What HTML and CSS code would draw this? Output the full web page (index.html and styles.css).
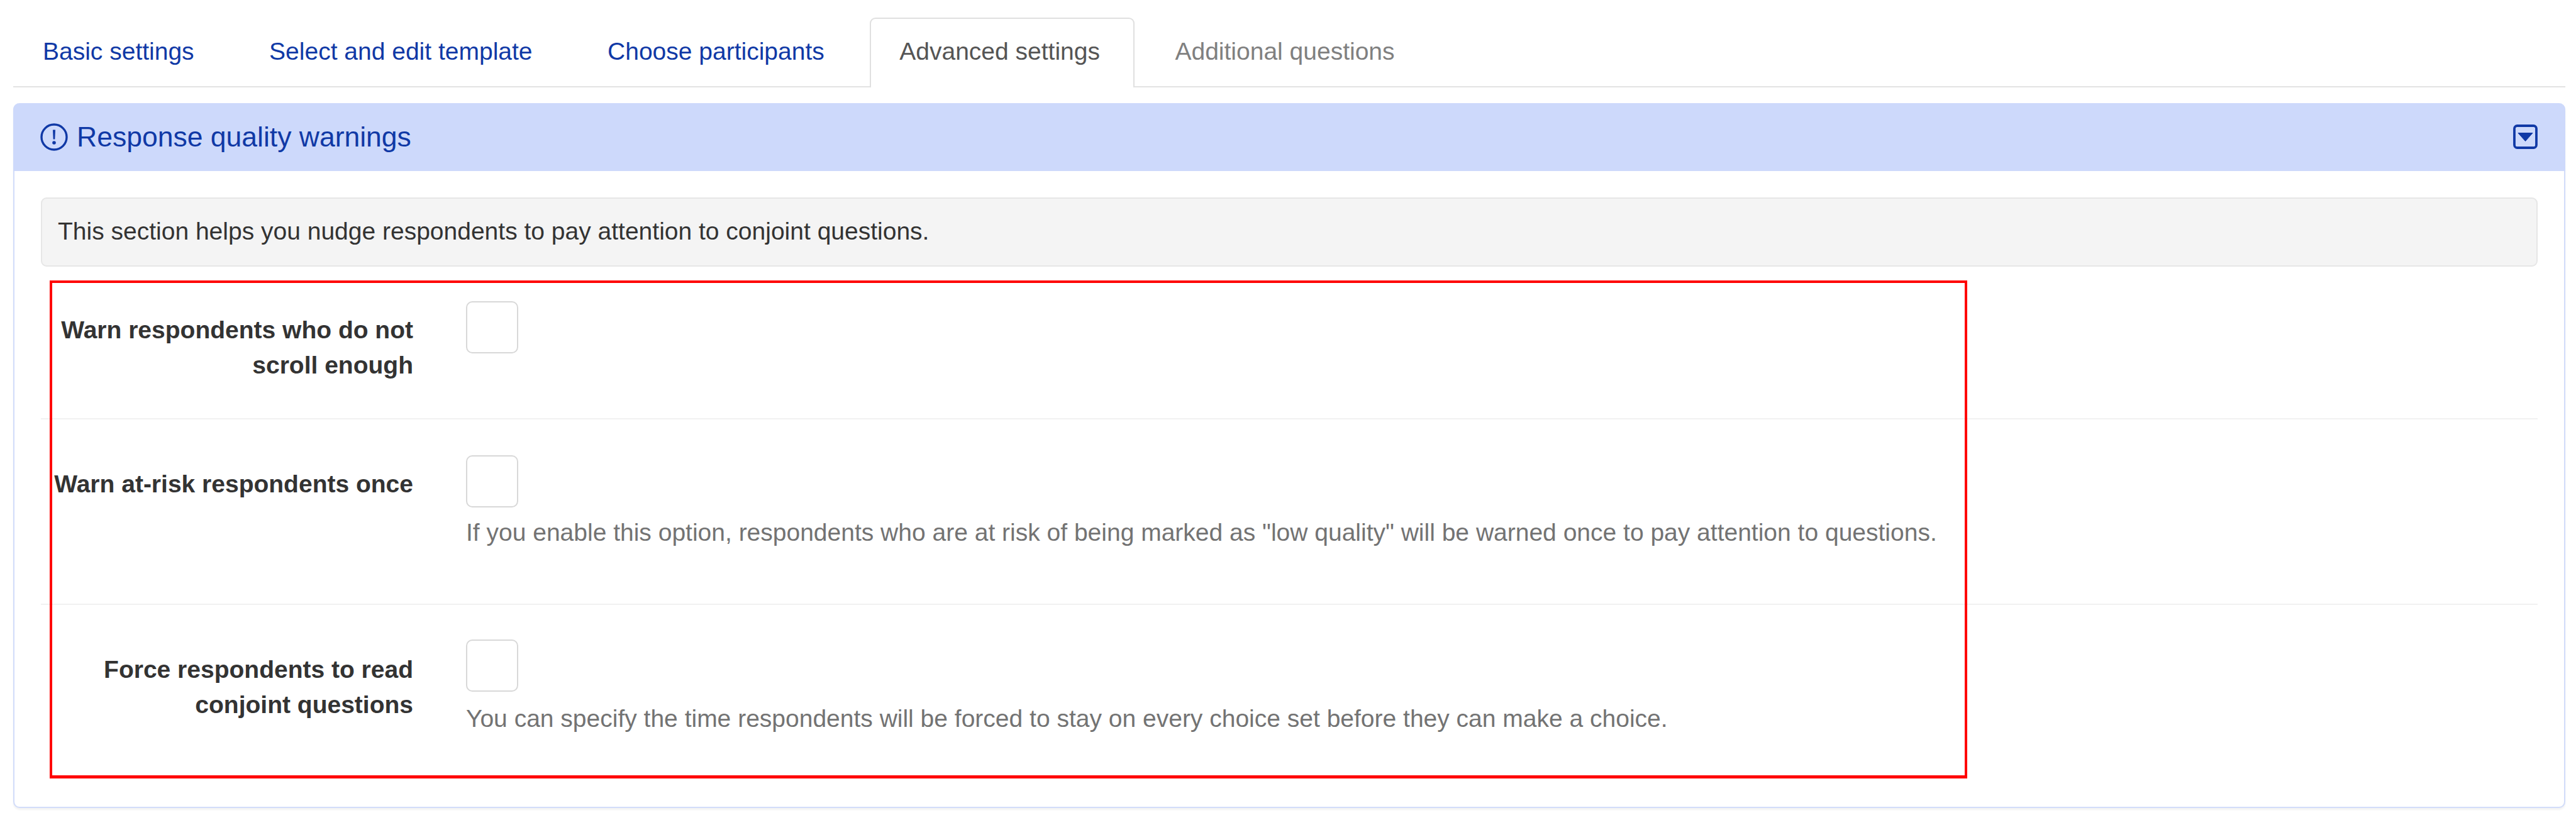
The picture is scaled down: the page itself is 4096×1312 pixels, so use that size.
FILE: index.html
```html
<!DOCTYPE html>
<html lang="en">
<head>
<meta charset="utf-8">
<title>Advanced settings</title>
<link rel="stylesheet" href="styles.css">
</head>
<body>
<main class="page">
  <nav class="tabs">
    <a class="tab">Basic settings</a>
    <a class="tab">Select and edit template</a>
    <a class="tab">Choose participants</a>
    <a class="tab active">Advanced settings</a>
    <a class="tab disabled">Additional questions</a>
  </nav>
  <section class="panel">
    <header class="panel-head">
      <h2 class="panel-title">
        <svg class="icon-alert" viewBox="0 0 44 44" aria-hidden="true">
          <circle cx="22" cy="22" r="20" fill="none" stroke="currentColor" stroke-width="3.4"/>
          <path d="M20 10.5h4l-.7 15h-2.6z" fill="currentColor"/>
          <circle cx="22" cy="31" r="2.8" fill="currentColor"/>
        </svg>
        <span>Response quality warnings</span>
      </h2>
      <svg class="icon-toggle" viewBox="0 0 39 39" aria-hidden="true">
        <rect x="2" y="2" width="35" height="35" rx="4.5" fill="none" stroke="currentColor" stroke-width="3.8"/>
        <path d="M8 13.5h23L19.5 26.5z" fill="currentColor" stroke="currentColor" stroke-width="1" stroke-linejoin="round"/>
      </svg>
    </header>
    <div class="panel-body">
      <p class="well">This section helps you nudge respondents to pay attention to conjoint questions.</p>
      <div class="row">
        <label class="row-label">Warn respondents who do not scroll enough</label>
        <div class="row-control"><span class="checkbox"></span></div>
      </div>
      <div class="row row-mid">
        <label class="row-label">Warn at-risk respondents once</label>
        <div class="row-control">
          <span class="checkbox"></span>
          <p class="help">If you enable this option, respondents who are at risk of being marked as "low quality" will be warned once to pay attention to questions.</p>
        </div>
      </div>
      <div class="row row-last">
        <label class="row-label">Force respondents to read conjoint questions</label>
        <div class="row-control">
          <span class="checkbox"></span>
          <p class="help">You can specify the time respondents will be forced to stay on every choice set before they can make a choice.</p>
        </div>
      </div>
    </div>
  </section>
  <div class="highlight"></div>
</main>
</body>
</html>
```
FILE: styles.css
```css
* { box-sizing: border-box; }
html, body { margin: 0; padding: 0; background: #fff; }
body {
  font-family: "Liberation Sans", Arial, sans-serif;
  font-size: 39px;
  line-height: 56px;
  color: #333;
}
.page { position: relative; width: 4096px; height: 1312px; padding: 0 17.5px 0 21px; overflow: hidden; }

.tabs {
  display: flex;
  gap: 17.5px;
  height: 139px;
  padding: 28px 0 0 0;
  border-bottom: 2px solid #e3e3e3;
}
.tab {
  height: 111px;
  padding: 24px 53px 0 45px;
  color: #1039a6;
  border: 2px solid transparent;
  border-bottom: 0;
  border-radius: 9px 9px 0 0;
  white-space: nowrap;
}
.tab.active { color: #555; background: #fff; border-color: #e0e0e0; }
.tab.disabled { color: #808080; }

.panel {
  margin-top: 25px;
  height: 1121px;
  background: #fff;
  border: 2px solid #d2dcfa;
  border-top: 0;
  border-radius: 10px;
  box-shadow: 0 3px 3px rgba(0, 0, 0, .05);
}
.panel-head {
  display: flex;
  align-items: center;
  justify-content: space-between;
  height: 108px;
  margin: 0 -2px;
  padding: 0 44px 0 43px;
  background: #cdd9fb;
  color: #1039a6;
  border-radius: 10px 10px 0 0;
}
.panel-title {
  display: flex;
  align-items: center;
  gap: 14px;
  margin: 0;
  font-size: 44.5px;
  font-weight: 400;
  line-height: 56px;
}
.icon-alert { width: 44px; height: 44px; flex: none; }
.icon-toggle { width: 39px; height: 39px; flex: none; margin-bottom: 1px; }

.panel-body { padding: 42px 42px 0 42px; }
.well {
  height: 110px;
  margin: 0;
  padding: 24px 25px;
  background: #f4f4f4;
  border: 2px solid #e6e6e6;
  border-radius: 9px;
}
.row {
  display: grid;
  grid-template-columns: 592px 1fr;
  column-gap: 84px;
  padding-top: 55px;
  border-bottom: 2px solid #f1f1f1;
}
.row-mid { padding-top: 57px; }
.row-last { border-bottom: 0; }
.row-label {
  padding-top: 18px;
  padding-bottom: 56px;
  text-align: right;
  font-weight: 700;
}
.row-last .row-label { padding-top: 20px; }
.checkbox {
  display: block;
  width: 83px;
  height: 83px;
  border: 2px solid #d8d8d8;
  border-radius: 10px;
  background: #fff;
}
.help {
  margin: 12px 0 85px;
  color: #737373;
}
.row-last .help { margin-top: 15px; }

.highlight {
  position: absolute;
  left: 79px;
  top: 446px;
  width: 3049px;
  height: 792px;
  border: 4px solid #f00;
  border-bottom-width: 5px;
  pointer-events: none;
}
```
